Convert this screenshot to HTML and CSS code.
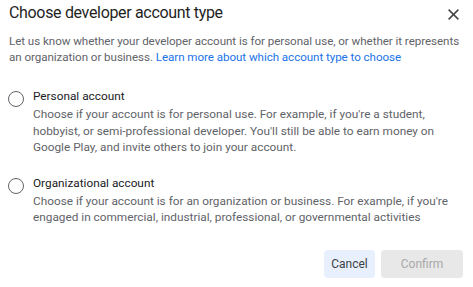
FILE: index.html
```html
<!DOCTYPE html>
<html lang="en">
<head>
  <meta charset="UTF-8">
  <title>Choose developer account type</title>
  <link rel="stylesheet" href="styles.css">
</head>
<body>
  <div class="dialog">
    <div class="dialog-header">
      <h1 class="dialog-title">Choose developer account type</h1>
      <button class="close-btn" aria-label="Close">
        <svg width="11" height="11" viewBox="0 0 11 11">
          <path d="M0.6 0.6 L10.4 10.4 M10.4 0.6 L0.6 10.4" stroke="#444746" stroke-width="1.5" fill="none"/>
        </svg>
      </button>
    </div>

    <p class="intro">
      Let us know whether your developer account is for personal use, or whether it represents
      an organization or business. <a href="#" class="link">Learn more about which account type to choose</a>
    </p>

    <div class="options">
      <label class="option">
        <span class="radio"></span>
        <span class="option-text">
          <span class="option-label">Personal account</span>
          <span class="option-desc">Choose if your account is for personal use. For example, if you're a student, hobbyist, or semi-professional developer. You'll still be able to earn money on Google Play, and invite others to join your account.</span>
        </span>
      </label>

      <label class="option">
        <span class="radio"></span>
        <span class="option-text">
          <span class="option-label">Organizational account</span>
          <span class="option-desc">Choose if your account is for an organization or business. For example, if you're engaged in commercial, industrial, professional, or governmental activities</span>
        </span>
      </label>
    </div>

    <div class="actions">
      <button class="btn cancel">Cancel</button>
      <button class="btn confirm" disabled>Confirm</button>
    </div>
  </div>
</body>
</html>
```

FILE: styles.css
```css
body {
  margin: 0;
  background: #ffffff;
  font-family: Roboto, "Noto Sans", Arial, sans-serif;
  color: #202124;
}

.dialog {
  width: 473px;
  height: 287px;
  box-sizing: border-box;
  padding: 1px 10px 0 9px;
}

.dialog-header {
  display: flex;
  justify-content: space-between;
  align-items: flex-start;
}

.dialog-title {
  margin: 0;
  font-size: 16px;
  font-weight: 400;
  line-height: 24px;
  letter-spacing: -0.33px;
  color: #1f1f1f;
}

.close-btn {
  border: none;
  background: none;
  padding: 0;
  margin: 8px 4px 0 0;
  width: 11px;
  height: 11px;
  display: flex;
  cursor: pointer;
}

.intro {
  margin: 8px 0 0;
  font-size: 11.6px;
  line-height: 16px;
  letter-spacing: -0.05px;
  color: #5f6368;
}

.link {
  color: #1a73e8;
  text-decoration: none;
}

.options {
  margin-top: 23px;
  display: flex;
  flex-direction: column;
  gap: 19px;
}

.option {
  display: flex;
  align-items: flex-start;
  gap: 9px;
}

.radio {
  flex: none;
  width: 16px;
  height: 16px;
  box-sizing: border-box;
  border: 1.5px solid #5f6368;
  border-radius: 50%;
  margin-top: 3px;
  margin-left: -1px;
}

.option-text {
  display: flex;
  flex-direction: column;
  gap: 2px;
}

.option-label {
  font-size: 11.8px;
  line-height: 16px;
  color: #202124;
}

.option-desc {
  font-size: 11.8px;
  line-height: 16.5px;
  color: #5f6368;
}

.actions {
  margin-top: 24px;
  display: flex;
  justify-content: flex-end;
  gap: 6px;
}

.btn {
  height: 28px;
  border: none;
  border-radius: 4px;
  font-family: Roboto, "Noto Sans", Arial, sans-serif;
  font-size: 12px;
  font-weight: 400;
  padding: 0;
  cursor: pointer;
}

.btn.cancel {
  width: 51px;
  background: #e8f0fe;
  color: #3c4043;
}

.btn.confirm {
  width: 82px;
  background: #e8e8e8;
  color: #a8a8a8;
  cursor: default;
}
```
